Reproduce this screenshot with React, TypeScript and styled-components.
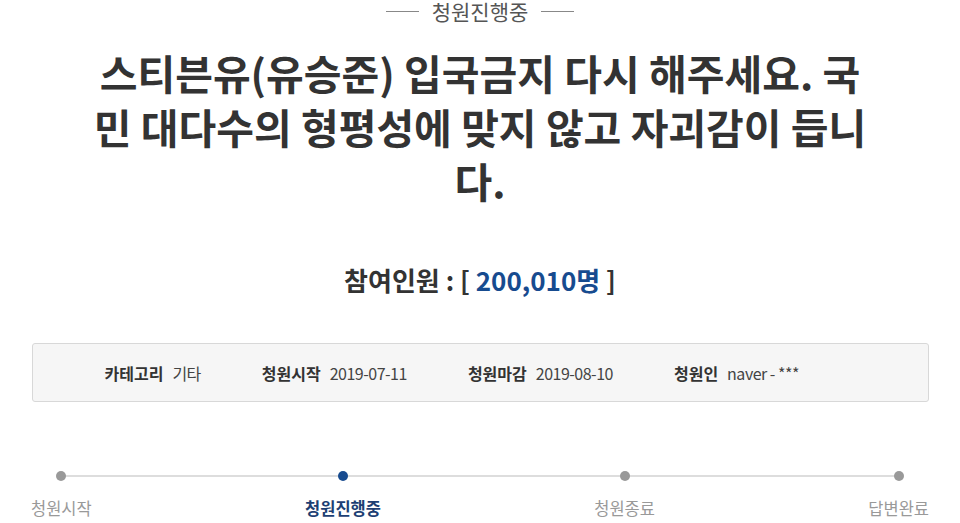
import React from 'react';
import styled, { createGlobalStyle } from 'styled-components';

const GlobalStyle = createGlobalStyle`
  html, body {
    margin: 0;
    padding: 0;
    background: #fff;
  }
  body {
    font-family: "Noto Sans CJK KR", "Noto Sans", sans-serif;
    color: #333;
  }
`;

const Page = styled.div`
  width: 960px;
  height: 523px;
  overflow: hidden;
  display: flex;
  flex-direction: column;
  align-items: center;
`;

const Status = styled.div`
  display: flex;
  align-items: center;
  gap: 13px;
  height: 22px;
  font-size: 21px;
  line-height: 22px;
  color: #555;

  &::before, &::after {
    content: '';
    width: 33px;
    height: 1px;
    background: #888;
  }
`;

const Title = styled.h1`
  width: 790px;
  margin: 23px 0 0;
  font-size: 41px;
  line-height: 54px;
  font-weight: 700;
  text-align: center;
  color: #333;
`;

const Count = styled.div`
  margin-top: 55px;
  font-size: 26px;
  font-weight: 700;
  line-height: 36px;
  color: #333;
`;

const Number = styled.span`
  color: #174b8f;
`;

const InfoBox = styled.ul`
  box-sizing: border-box;
  width: 897px;
  height: 59px;
  margin: 45px 0 0;
  padding: 0 0 0 72px;
  list-style: none;
  display: flex;
  align-items: center;
  gap: 61px;
  background: #f6f6f6;
  border: 1px solid #d8d8d8;
  border-radius: 3px;
  font-size: 16px;
`;

const InfoItem = styled.li`
  display: flex;
  gap: 9px;
  white-space: nowrap;
`;

const InfoLabel = styled.span`
  font-weight: 700;
  color: #333;
`;

const InfoValue = styled.span`
  color: #444;
  letter-spacing: -0.5px;
`;

const Steps = styled.ol`
  position: relative;
  box-sizing: border-box;
  width: 898px;
  margin: 67px 0 0;
  padding: 0;
  list-style: none;
  display: flex;
  justify-content: space-between;

  &::before {
    content: '';
    position: absolute;
    left: 30px;
    right: 30px;
    top: 6px;
    height: 2px;
    background: #ddd;
  }
`;

const Step = styled.li<{ $active?: boolean }>`
  position: relative;
  display: flex;
  flex-direction: column;
  align-items: center;
  gap: 15px;
  font-size: 16.5px;
  font-weight: ${p => (p.$active ? 700 : 400)};
  color: ${p => (p.$active ? '#1d3f73' : '#999')};

  &::before {
    content: '';
    width: 10px;
    height: 10px;
    margin-top: 2px;
    border-radius: 50%;
    background: ${p => (p.$active ? '#174b8f' : '#999')};
  }
`;

const steps = [
  { label: '청원시작' },
  { label: '청원진행중', active: true },
  { label: '청원종료' },
  { label: '답변완료' },
];

const App: React.FC = () => (
  <Page>
    <GlobalStyle />
    <Status>청원진행중</Status>
    <Title>
      스티븐유(유승준) 입국금지 다시 해주세요. 국민 대다수의 형평성에 맞지 않고 자괴감이 듭니다.
    </Title>
    <Count>
      참여인원 : [ <Number>200,010명</Number> ]
    </Count>
    <InfoBox>
      <InfoItem><InfoLabel>카테고리</InfoLabel><InfoValue>기타</InfoValue></InfoItem>
      <InfoItem><InfoLabel>청원시작</InfoLabel><InfoValue>2019-07-11</InfoValue></InfoItem>
      <InfoItem><InfoLabel>청원마감</InfoLabel><InfoValue>2019-08-10</InfoValue></InfoItem>
      <InfoItem><InfoLabel>청원인</InfoLabel><InfoValue>naver - ***</InfoValue></InfoItem>
    </InfoBox>
    <Steps>
      {steps.map(s => (
        <Step key={s.label} $active={s.active}>{s.label}</Step>
      ))}
    </Steps>
  </Page>
);

export default App;
